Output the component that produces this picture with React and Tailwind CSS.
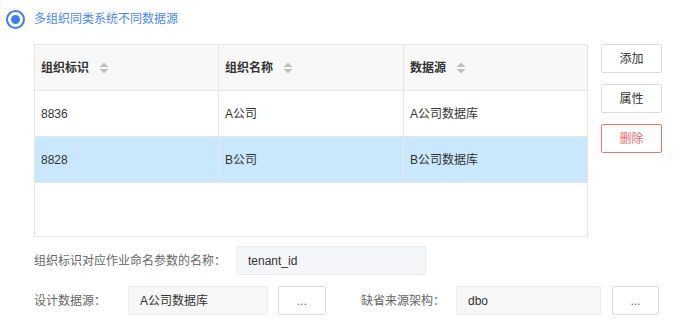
import React from "react";

const font = { fontFamily: '"Liberation Sans", "Noto Sans CJK SC", sans-serif' };

function SortIcon() {
  return (
    <svg width="10" height="12" viewBox="0 0 10 12" className="ml-[10px] shrink-0">
      <path d="M5 0.5 L9.5 5 L0.5 5 Z" fill="#c0c0c0" />
      <path d="M0.5 7 L9.5 7 L5 11.5 Z" fill="#c0c0c0" />
    </svg>
  );
}

function Cell({ children, last, className = "" }) {
  return (
    <div className={`flex items-center pl-[6px] ${last ? "" : "border-r border-[#e6e6e6]"} ${className}`}>
      {children}
    </div>
  );
}

export default function App() {
  const rows = [
    ["8836", "A公司", "A公司数据库", false],
    ["8828", "B公司", "B公司数据库", true],
  ];
  return (
    <div className="w-[674px] h-[324px] bg-white text-[12px] text-[#333]" style={font}>
      <div className="flex items-center pl-[6px] pt-[9px] h-[29px]">
        <div className="w-[19px] h-[19px] rounded-full border-2 border-[#3d7ff0] flex items-center justify-center">
          <div className="w-[9px] h-[9px] rounded-full bg-[#3d7ff0]" />
        </div>
        <span className="ml-[9px] text-[#4a88f0] text-[12px]">多组织同类系统不同数据源</span>
      </div>
      <div className="flex mt-[15px] ml-[34px]">
        <div className="w-[554px] h-[193px] border border-[#e6e6e6] flex flex-col">
          <div className="grid grid-cols-[184px_185px_1fr] h-[46px] bg-[#f8f8f8] border-b border-[#e6e6e6] font-semibold text-[#333]">
            <Cell>组织标识<SortIcon /></Cell>
            <Cell>组织名称<SortIcon /></Cell>
            <Cell last>数据源<SortIcon /></Cell>
          </div>
          {rows.map(([a, b, c, sel]) => (
            <div
              key={a}
              className={`grid grid-cols-[184px_185px_1fr] h-[46px] border-b border-[#e6e6e6] ${sel ? "bg-[#c9e8fb]" : "bg-white"}`}
            >
              <Cell>{a}</Cell>
              <Cell>{b}</Cell>
              <Cell last>{c}</Cell>
            </div>
          ))}
        </div>
        <div className="ml-[13px] flex flex-col gap-[11px]">
          <button className="w-[61px] h-[29px] border border-[#dcdcdc] rounded-[2px] bg-white text-[#333] text-[12px]">添加</button>
          <button className="w-[61px] h-[29px] border border-[#dcdcdc] rounded-[2px] bg-white text-[#333] text-[12px]">属性</button>
          <button className="w-[61px] h-[29px] border border-[#f07474] rounded-[2px] bg-white text-[#f06a6a] text-[12px]">删除</button>
        </div>
      </div>
      <div className="flex items-center ml-[34px] mt-[9px] h-[29px]">
        <span className="w-[202px] text-[#666]">组织标识对应作业命名参数的名称：</span>
        <div className="w-[190px] h-[29px] bg-[#f5f6f9] border border-[#ececec] rounded-[2px] flex items-center pl-[11px] text-[#333]">tenant_id</div>
      </div>
      <div className="flex items-center ml-[34px] mt-[11px] h-[29px]">
        <span className="w-[94px] text-[#666]">设计数据源：</span>
        <div className="w-[140px] h-[29px] bg-[#f7f7f7] border border-[#ececec] rounded-[2px] flex items-center pl-[11px] text-[#333]">A公司数据库</div>
        <button className="ml-[10px] w-[48px] h-[29px] border border-[#dcdcdc] rounded-[2px] bg-white text-[#666] text-[12px]">...</button>
        <span className="w-[130px] text-right pr-[11px] text-[#666]">缺省来源架构：</span>
        <div className="w-[145px] h-[29px] bg-[#f7f7f7] border border-[#ececec] rounded-[2px] flex items-center pl-[11px] text-[#333]">dbo</div>
        <button className="ml-[11px] w-[47px] h-[29px] border border-[#dcdcdc] rounded-[2px] bg-white text-[#666] text-[12px]">...</button>
      </div>
    </div>
  );
}
